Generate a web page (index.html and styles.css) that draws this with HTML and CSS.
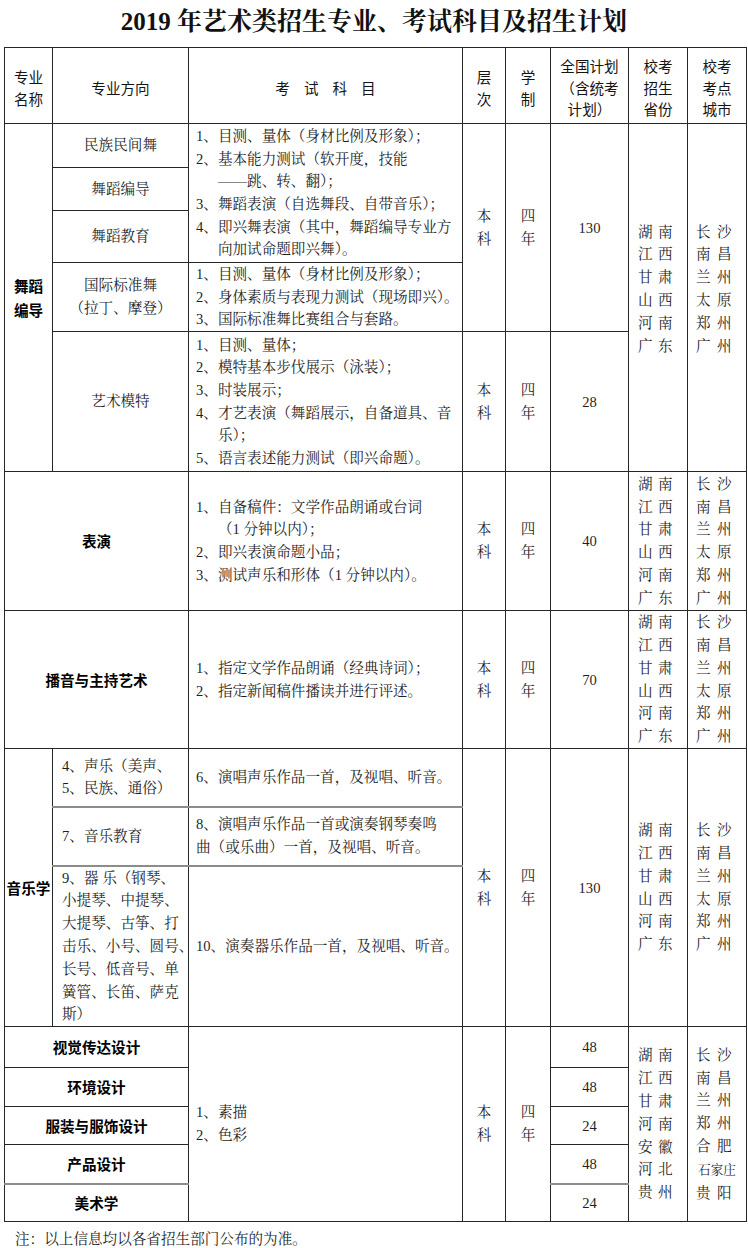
FILE: index.html
```html
<!DOCTYPE html>
<html lang="zh-CN">
<head>
<meta charset="utf-8">
<title>2019年艺术类招生专业、考试科目及招生计划</title>
<link rel="stylesheet" href="styles.css">
</head>
<body>
<div class="page">
  <h1 class="title">2019 年艺术类招生专业、考试科目及招生计划</h1>
  <table class="plan">
    <colgroup>
      <col class="c-name"><col class="c-dir"><col class="c-exam"><col class="c-level"><col class="c-len"><col class="c-num"><col class="c-prov"><col class="c-city">
    </colgroup>
    <thead>
      <tr class="r-head">
        <th>专业<br>名称</th>
        <th>专业方向</th>
        <th class="h-exam">考试科目</th>
        <th>层<br>次</th>
        <th>学<br>制</th>
        <th>全国计划<br>（含统考<br>计划）</th>
        <th>校考<br>招生<br>省份</th>
        <th>校考<br>考点<br>城市</th>
      </tr>
    </thead>
    <tbody>
      <tr class="r1">
        <td class="name" rowspan="5">舞蹈<br>编导</td>
        <td class="dir">民族民间舞</td>
        <td class="exam" rowspan="3">
          <div class="item">1、目测、量体（身材比例及形象）；</div>
          <div class="item">2、基本能力测试（软开度，技能<br>——跳、转、翻）；</div>
          <div class="item">3、舞蹈表演（自选舞段、自带音乐）；</div>
          <div class="item">4、即兴舞表演（其中，舞蹈编导专业方<br>向加试命题即兴舞）。</div>
        </td>
        <td class="stack" rowspan="4">本<br>科</td>
        <td class="stack" rowspan="4">四<br>年</td>
        <td class="num" rowspan="4">130</td>
        <td class="prov dance" rowspan="5">湖南<br>江西<br>甘肃<br>山西<br>河南<br>广东</td>
        <td class="city dance" rowspan="5">长沙<br>南昌<br>兰州<br>太原<br>郑州<br>广州</td>
      </tr>
      <tr class="r2">
        <td class="dir">舞蹈编导</td>
      </tr>
      <tr class="r3">
        <td class="dir">舞蹈教育</td>
      </tr>
      <tr class="r4">
        <td class="dir">国际标准舞<br>（拉丁、摩登）</td>
        <td class="exam soft-top">
          <div class="item">1、目测、量体（身材比例及形象）；</div>
          <div class="item">2、身体素质与表现力测试（现场即兴）。</div>
          <div class="item">3、国际标准舞比赛组合与套路。</div>
        </td>
      </tr>
      <tr class="r5">
        <td class="dir">艺术模特</td>
        <td class="exam">
          <div class="item">1、目测、量体；</div>
          <div class="item">2、模特基本步伐展示（泳装）；</div>
          <div class="item">3、时装展示；</div>
          <div class="item">4、才艺表演（舞蹈展示，自备道具、音<br>乐）；</div>
          <div class="item">5、语言表述能力测试（即兴命题）。</div>
        </td>
        <td class="stack">本<br>科</td>
        <td class="stack">四<br>年</td>
        <td class="num">28</td>
      </tr>
      <tr class="r6">
        <td class="name" colspan="2">表演</td>
        <td class="exam">
          <div class="item">1、自备稿件：文学作品朗诵或台词<br>（1 分钟以内）；</div>
          <div class="item">2、即兴表演命题小品；</div>
          <div class="item">3、测试声乐和形体（1 分钟以内）。</div>
        </td>
        <td class="stack">本<br>科</td>
        <td class="stack">四<br>年</td>
        <td class="num">40</td>
        <td class="prov">湖南<br>江西<br>甘肃<br>山西<br>河南<br>广东</td>
        <td class="city">长沙<br>南昌<br>兰州<br>太原<br>郑州<br>广州</td>
      </tr>
      <tr class="r7">
        <td class="name" colspan="2">播音与主持艺术</td>
        <td class="exam">
          <div class="item">1、指定文学作品朗诵（经典诗词）；</div>
          <div class="item">2、指定新闻稿件播读并进行评述。</div>
        </td>
        <td class="stack">本<br>科</td>
        <td class="stack">四<br>年</td>
        <td class="num">70</td>
        <td class="prov">湖南<br>江西<br>甘肃<br>山西<br>河南<br>广东</td>
        <td class="city">长沙<br>南昌<br>兰州<br>太原<br>郑州<br>广州</td>
      </tr>
      <tr class="r8">
        <td class="name" rowspan="3">音乐学</td>
        <td class="dir left">4、声乐（美声、<br>5、民族、通俗）</td>
        <td class="exam">6、演唱声乐作品一首，及视唱、听音。</td>
        <td class="stack" rowspan="3">本<br>科</td>
        <td class="stack" rowspan="3">四<br>年</td>
        <td class="num" rowspan="3">130</td>
        <td class="prov" rowspan="3">湖南<br>江西<br>甘肃<br>山西<br>河南<br>广东</td>
        <td class="city" rowspan="3">长沙<br>南昌<br>兰州<br>太原<br>郑州<br>广州</td>
      </tr>
      <tr class="r9">
        <td class="dir left gray-top">7、音乐教育</td>
        <td class="exam gray-top">8、演唱声乐作品一首或演奏钢琴奏鸣<br>曲（或乐曲）一首，及视唱、听音。</td>
      </tr>
      <tr class="r10">
        <td class="dir left gray-top">9、器 乐（钢琴、<br>小提琴、中提琴、<br>大提琴、古筝、打<br>击乐、小号、圆号、<br>长号、低音号、单<br>簧管、长笛、萨克<br>斯）</td>
        <td class="exam gray-top">10、演奏器乐作品一首，及视唱、听音。</td>
      </tr>
      <tr class="r11">
        <td class="name" colspan="2">视觉传达设计</td>
        <td class="exam" rowspan="5">
          <div class="item">1、素描</div>
          <div class="item">2、色彩</div>
        </td>
        <td class="stack" rowspan="5">本<br>科</td>
        <td class="stack" rowspan="5">四<br>年</td>
        <td class="num">48</td>
        <td class="prov" rowspan="5">湖南<br>江西<br>甘肃<br>河南<br>安徽<br>河北<br>贵州</td>
        <td class="city" rowspan="5">长沙<br>南昌<br>兰州<br>郑州<br>合肥<br><span class="small">石家庄</span><br>贵阳</td>
      </tr>
      <tr class="r12">
        <td class="name" colspan="2">环境设计</td>
        <td class="num">48</td>
      </tr>
      <tr class="r13">
        <td class="name" colspan="2">服装与服饰设计</td>
        <td class="num">24</td>
      </tr>
      <tr class="r14">
        <td class="name" colspan="2">产品设计</td>
        <td class="num">48</td>
      </tr>
      <tr class="r15">
        <td class="name gray-top" colspan="2">美术学</td>
        <td class="num gray-top">24</td>
      </tr>
    </tbody>
  </table>
  <p class="note">注：以上信息均以各省招生部门公布的为准。</p>
</div>
</body>
</html>
```

FILE: styles.css
```css
* {
  box-sizing: border-box;
}

html,
body {
  margin: 0;
  padding: 0;
  background: #ffffff;
}

body {
  font-family: "Liberation Serif", "Noto Serif CJK SC", "Noto Sans CJK SC", serif;
  font-size: 14.6px;
  color: #1f1f1f;
}

.page {
  width: 748px;
}

.title {
  margin: 0;
  height: 47px;
  padding-top: 5px;
  font-family: "Liberation Serif", "Noto Serif CJK SC", "Noto Sans CJK SC", serif;
  font-size: 25px;
  line-height: 34px;
  font-weight: 700;
  text-align: center;
  color: #111111;
  white-space: nowrap;
}

.plan {
  border-collapse: collapse;
  table-layout: fixed;
  width: 742px;
  margin-left: 4px;
}

.c-name { width: 48px; }
.c-dir { width: 136px; }
.c-exam { width: 274px; }
.c-level { width: 43px; }
.c-len { width: 45px; }
.c-num { width: 78px; }
.c-prov { width: 59px; }
.c-city { width: 59px; }

.plan th,
.plan td {
  border: 1px solid #262626;
  padding: 0;
  text-align: center;
  vertical-align: middle;
  white-space: nowrap;
  overflow: visible;
}

.plan th {
  font-family: "Noto Sans CJK SC", sans-serif;
  font-weight: 400;
  font-size: 14.6px;
  line-height: 21.5px;
  color: #141414;
  padding-top: 4px;
}

.plan th.h-exam {
  letter-spacing: 14px;
  padding-left: 14px;
}

.r-head { height: 76px; }
.r1 { height: 44px; }
.r2 { height: 43px; }
.r3 { height: 52px; }
.r4 { height: 68px; }
.r5 { height: 140px; }
.r6 { height: 139px; }
.r7 { height: 138px; }
.r8 { height: 58px; }
.r9 { height: 59px; }
.r10 { height: 161px; }
.r11 { height: 41px; }
.r12 { height: 39px; }
.r13 { height: 38px; }
.r14 { height: 39px; }
.r15 { height: 38px; }

.name {
  font-family: "Noto Sans CJK SC", sans-serif;
  font-weight: 700;
  color: #000000;
  line-height: 24px;
}

.dir {
  line-height: 23px;
}

.dir.left {
  text-align: left;
  padding-left: 9px;
  line-height: 22.8px;
}

.plan td.exam {
  text-align: left;
  padding-left: 7px;
  line-height: 22.7px;
}

.item {
  padding-left: 21.9px;
  text-indent: -21.9px;
}

.stack {
  line-height: 23px;
}

.num {
  line-height: 22px;
}

.prov,
.city {
  line-height: 22.8px;
}

.prov {
  letter-spacing: 5.4px;
}

.city {
  letter-spacing: 6.4px;
}

.prov.dance,
.city.dance {
  padding-bottom: 17px;
}

.small {
  font-size: 12.6px;
  letter-spacing: 0;
}

.plan td.gray-top {
  border-top: 2px solid #8c8c8c;
}

.plan td.soft-top {
  border-top: 1px solid #8c8c8c;
}

.note {
  margin: 7px 0 0 0;
  padding-left: 15px;
  line-height: 20px;
  font-size: 14.6px;
  color: #1f1f1f;
}
```
